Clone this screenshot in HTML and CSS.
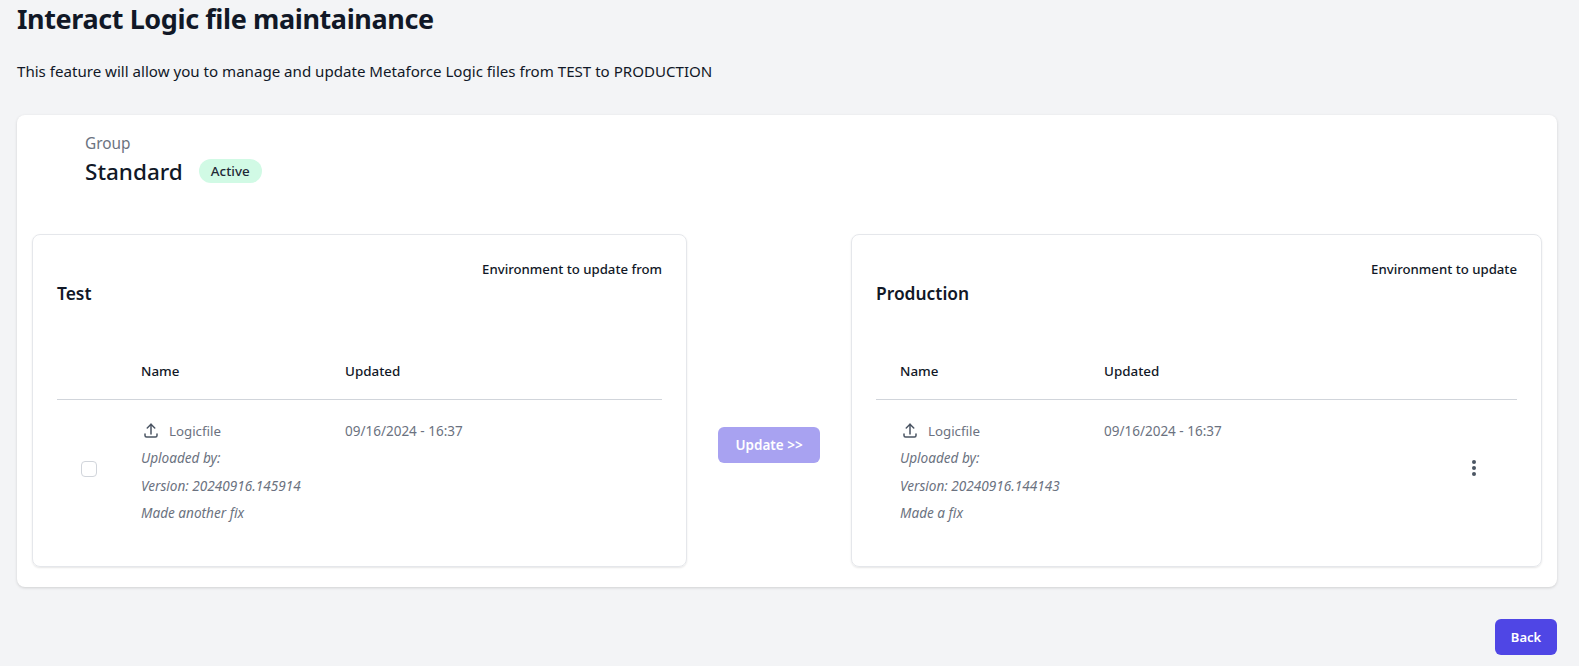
FILE: index.html
```html
<!DOCTYPE html>
<html lang="en">

<head>
    <meta charset="UTF-8">
    <meta name="viewport" content="width=device-width, initial-scale=1.0">
    <title>Interact Logic file maintainance</title>
    <link rel="stylesheet" href="styles.css">
</head>

<body>
    <h1 class="page-title">Interact Logic file maintainance</h1>
    <p class="page-intro">This feature will allow you to manage and update Metaforce Logic files from TEST to PRODUCTION</p>

    <div class="group-card">
        <div class="group-head">
            <div class="group-label">Group</div>
            <div class="group-name-row">
                <span class="group-name">Standard</span>
                <span class="badge">Active</span>
            </div>
        </div>

        <div class="env-grid">
            <section class="env-card">
                <div class="env-note">Environment to update from</div>
                <h2 class="env-title">Test</h2>
                <div class="file-table test-table">
                    <div class="table-head">
                        <span></span>
                        <span>Name</span>
                        <span>Updated</span>
                    </div>
                    <div class="table-row">
                        <div class="check-cell"><span class="checkbox"></span></div>
                        <div class="file-cell">
                            <div class="file-name">
                                <svg class="upload-icon" viewBox="0 0 24 24" fill="none" stroke="currentColor" stroke-width="2" stroke-linecap="round" stroke-linejoin="round">
                                    <path d="M4 16v2a2 2 0 0 0 2 2h12a2 2 0 0 0 2-2v-2" />
                                    <path d="M7 8l5-5 5 5" />
                                    <path d="M12 3v13" />
                                </svg>
                                <span>Logicfile</span>
                            </div>
                            <div class="file-meta">Uploaded by:</div>
                            <div class="file-meta">Version: 20240916.145914</div>
                            <div class="file-meta">Made another fix</div>
                        </div>
                        <div class="date-cell">09/16/2024 - 16:37</div>
                    </div>
                </div>
            </section>

            <div class="update-col">
                <button class="btn update-btn">Update &gt;&gt;</button>
            </div>

            <section class="env-card">
                <div class="env-note">Environment to update</div>
                <h2 class="env-title">Production</h2>
                <div class="file-table prod-table">
                    <div class="table-head">
                        <span>Name</span>
                        <span>Updated</span>
                    </div>
                    <div class="table-row">
                        <div class="file-cell">
                            <div class="file-name">
                                <svg class="upload-icon" viewBox="0 0 24 24" fill="none" stroke="currentColor" stroke-width="2" stroke-linecap="round" stroke-linejoin="round">
                                    <path d="M4 16v2a2 2 0 0 0 2 2h12a2 2 0 0 0 2-2v-2" />
                                    <path d="M7 8l5-5 5 5" />
                                    <path d="M12 3v13" />
                                </svg>
                                <span>Logicfile</span>
                            </div>
                            <div class="file-meta">Uploaded by:</div>
                            <div class="file-meta">Version: 20240916.144143</div>
                            <div class="file-meta">Made a fix</div>
                        </div>
                        <div class="date-cell">09/16/2024 - 16:37</div>
                        <div class="menu-cell">
                            <svg class="menu-icon" viewBox="0 0 4 16" fill="currentColor">
                                <circle cx="2" cy="2" r="2" />
                                <circle cx="2" cy="8" r="2" />
                                <circle cx="2" cy="14" r="2" />
                            </svg>
                        </div>
                    </div>
                </div>
            </section>
        </div>
    </div>

    <div class="page-actions">
        <button class="btn back-btn">Back</button>
    </div>
</body>

</html>
```

FILE: styles.css
```css
body {
    margin: 0;
    padding: 0 22px 0 17px;
    height: 666px;
    box-sizing: border-box;
    overflow: hidden;
    background: #f3f4f6;
    color: #111827;
    font-family: "Noto Sans", "Open Sans", sans-serif;
}

.page-title {
    margin: 0;
    padding-top: 1px;
    font-size: 27px;
    letter-spacing: -0.4px;
    line-height: 36px;
    font-weight: 700;
}

.page-intro {
    margin: 24px 0 0;
    font-size: 15.1px;
    line-height: 20px;
}

.group-card {
    margin-top: 34px;
    height: 472px;
    box-sizing: border-box;
    padding: 19px 15px 0;
    background: #fff;
    border-radius: 8px;
    box-shadow: 0 1px 3px rgba(0, 0, 0, 0.15);
}

.group-head {
    padding-left: 53px;
    height: 100px;
}

.group-label {
    font-size: 15.4px;
    line-height: 20px;
    color: #6b7280;
}

.group-name-row {
    display: flex;
    align-items: center;
    gap: 16px;
    margin-top: 3px;
}

.group-name {
    font-size: 22.5px;
    line-height: 30px;
    font-weight: 500;
}

.badge {
    padding: 0 12px;
    height: 24px;
    margin-bottom: 2px;
    line-height: 24px;
    font-size: 13.4px;
    font-weight: 500;
    border-radius: 12px;
    background: #d1fae5;
    color: #1f2937;
}

.env-grid {
    display: grid;
    grid-template-columns: 655px 164px 691px;
}

.env-card {
    height: 333px;
    box-sizing: border-box;
    padding: 24px 24px 0;
    border: 1px solid #e5e7eb;
    border-radius: 8px;
    box-shadow: 0 1px 2px rgba(0, 0, 0, 0.1);
}

.env-note {
    text-align: right;
    font-size: 13.2px;
    line-height: 20px;
    font-weight: 500;
}

.env-title {
    margin: 2px 0 0;
    font-size: 17.4px;
    line-height: 24px;
    font-weight: 600;
}

.file-table {
    margin-top: 37px;
}

.table-head {
    display: grid;
    height: 57px;
    align-items: center;
    border-bottom: 1px solid #d1d5db;
    font-size: 13.4px;
    font-weight: 500;
}

.table-row {
    display: grid;
    padding-top: 17px;
}

.test-table .table-head,
.test-table .table-row {
    grid-template-columns: 84px 204px 1fr;
}

.prod-table .table-head,
.prod-table .table-row {
    grid-template-columns: 204px 1fr 45px;
    padding-left: 24px;
}

.check-cell {
    display: flex;
    align-items: center;
    padding-left: 24px;
    padding-bottom: 6px;
}

.checkbox {
    width: 14px;
    height: 14px;
    border: 1px solid #d1d5db;
    border-radius: 4px;
}

.file-name {
    display: flex;
    align-items: center;
    gap: 9px;
    height: 28px;
    padding-left: 1px;
    font-size: 13.3px;
    color: #6b7280;
}

.upload-icon {
    width: 18px;
    height: 18px;
    color: #4b5563;
}

.file-meta {
    height: 27.5px;
    line-height: 25px;
    font-size: 13.6px;
    font-style: italic;
    color: #6b7280;
}

.date-cell {
    font-size: 13.5px;
    line-height: 28px;
    color: #6b7280;
}

.menu-cell {
    display: flex;
    align-items: center;
    padding-bottom: 8px;
}

.menu-icon {
    width: 4px;
    height: 16px;
    color: #4b5563;
}

.update-col {
    display: flex;
    justify-content: center;
    align-items: center;
}

.btn {
    border: none;
    border-radius: 6px;
    color: #fff;
    font-family: inherit;
    font-size: 13px;
    font-weight: 600;
    height: 36px;
}

.update-btn {
    width: 102px;
    background: #a8a2f1;
    margin-top: 88px;
    font-size: 13.5px;
}

.page-actions {
    display: flex;
    justify-content: flex-end;
    margin-top: 32px;
}

.back-btn {
    width: 62px;
    background: #4f46e5;
}
```
